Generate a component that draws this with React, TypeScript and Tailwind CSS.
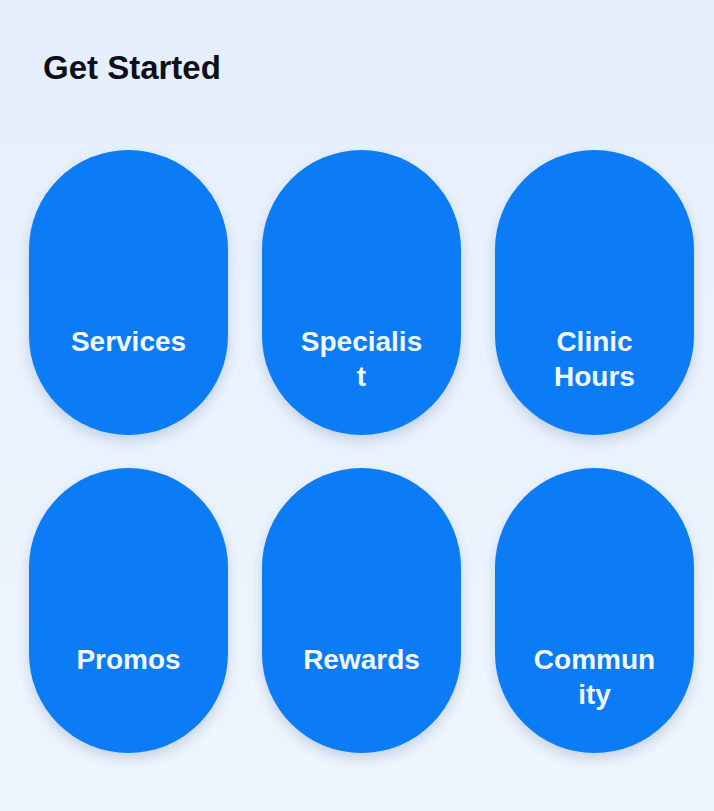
const items = ['Services', 'Specialist', 'Clinic Hours', 'Promos', 'Rewards', 'Community'];

export default function App() {
  return (
    <div
      className="min-h-[811px] w-full bg-gradient-to-b from-[#e5effc] to-[#eef5fd] px-[29px] pt-[48px] pb-[58px]"
      style={{ fontFamily: '"Liberation Sans", Arial, sans-serif' }}
    >
      <h1 className="pl-[14px] text-[33px] font-bold leading-[39px] text-[#0e0f1a]">Get Started</h1>
      <div className="mt-[63px] grid w-[665px] grid-cols-3 gap-x-[34px] gap-y-[33px]">
        {items.map((label) => (
          <button
            key={label}
            className="flex h-[285px] w-[199px] flex-col items-center rounded-full bg-[#0b7cf6] pt-[174px] shadow-[0_6px_12px_rgba(30,64,120,0.18)]"
          >
            <span className="w-[127px] text-center text-[28px] font-bold leading-[35px] text-[#f2f8ff] [overflow-wrap:anywhere]">
              {label}
            </span>
          </button>
        ))}
      </div>
    </div>
  );
}
